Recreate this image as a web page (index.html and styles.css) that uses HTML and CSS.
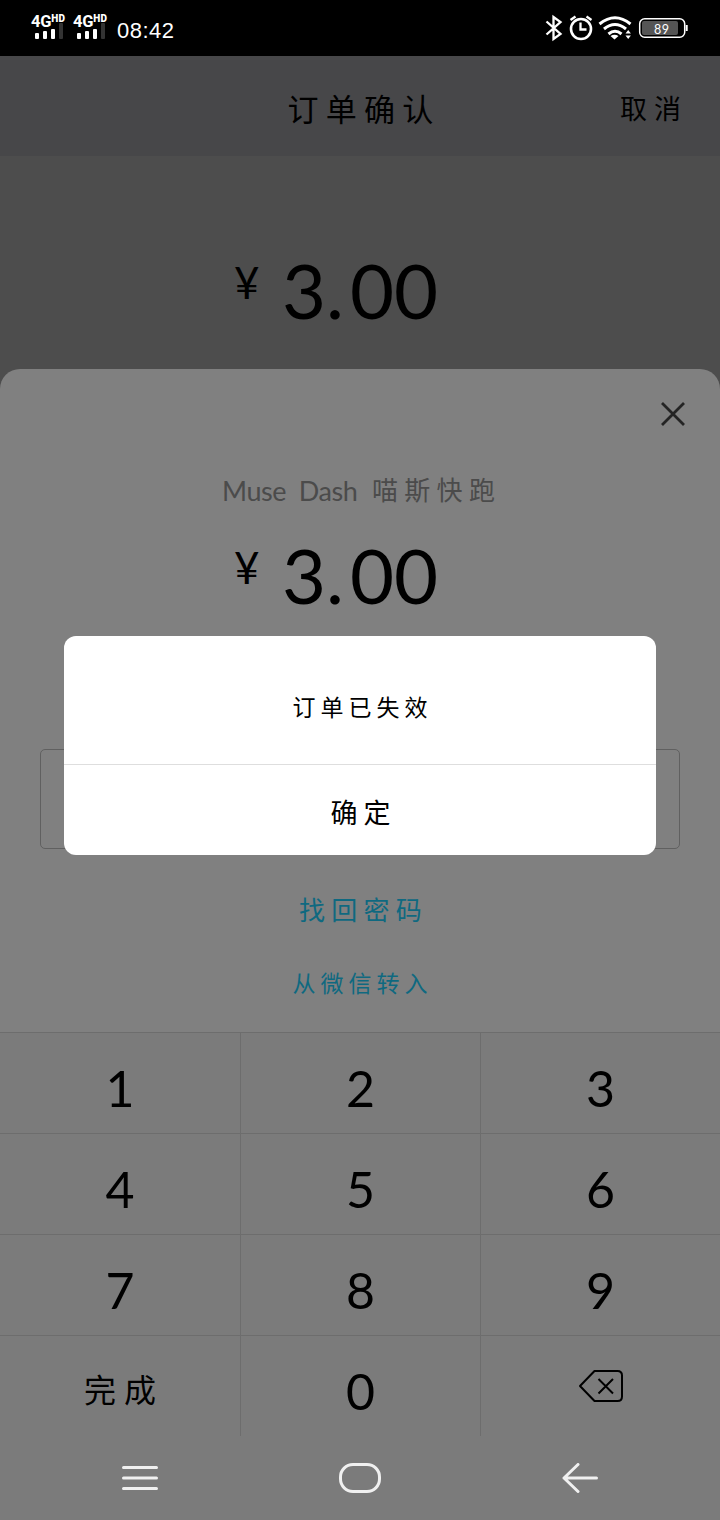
FILE: index.html
```html
<!DOCTYPE html>
<html lang="zh-CN">
<head>
<meta charset="utf-8">
<title>订单确认</title>
<link rel="stylesheet" href="styles.css">
</head>
<body>
<div class="screen">
  <div class="status">
    <div class="sims">
      <div class="sim"><div class="net">4G<sup>HD</sup></div><div class="bars"><i class="b1"></i><i class="b2"></i><i class="b3"></i><i class="b4"></i></div></div>
      <div class="sim"><div class="net">4G<sup>HD</sup></div><div class="bars"><i class="b1"></i><i class="b2"></i><i class="b3"></i><i class="b4"></i></div></div>
    </div>
    <div class="clock">08:42</div>
    <svg class="status-icons" width="146" height="30" viewBox="544 13 146 30" fill="none" stroke="#fff">
      <path d="M546.500 21.500 560.500 34 553.500 39V17L560.500 22 546.500 34.500" stroke-width="2.300"/>
      <circle cx="581" cy="29" r="10" stroke-width="2.600"/>
      <path d="M580.500 22.500v7h6M570.500 20l5-3.500M591.500 20l-5-3.500" stroke-width="2.300"/>
      <path d="M599.500 24q15.500-12.500 31 0M604 29q11-9 22 0M608.500 34q6.500-5.500 13 0" stroke-width="3"/>
      <path d="M610.500 36q4-2.500 8 0l-4 3.500zM625.500 33.500l2.700-3.500 2.700 3.500zM625.500 35.500h5.400l-2.700 3.500z" fill="#fff" stroke="none"/>
      <rect x="639.700" y="18.700" width="45" height="18.600" rx="5" stroke-width="1.500"/>
      <rect x="642" y="21" width="36" height="14" rx="2" fill="#555" stroke="none"/>
      <path d="M686.700 25v6" stroke-width="2"/>
      <text class="battery-text" x="654" y="33.500">89</text>
    </svg>
  </div>
  <div class="header">
    <span></span>
    <h1 class="title">订单确认</h1>
    <span class="cancel">取消</span>
  </div>
  <div class="order"><div class="amount"><span class="yen">¥</span><span class="value">3<b>.</b>00</span></div></div>
  <div class="sheet">
    <div class="close-row"><svg width="26" height="26" viewBox="0 0 26 26"><path d="M2 2 24 24M24 2 2 24" stroke="#242424" stroke-width="2.800"/></svg></div>
    <div class="goods"><span class="goods-latin">Muse Dash</span><span class="goods-cn">喵斯快跑</span></div>
    <div class="amount"><span class="yen">¥</span><span class="value">3<b>.</b>00</span></div>
    <div class="password"></div>
    <div class="find">找回密码</div>
    <div class="transfer">从微信转入</div>
  </div>
  <div class="keypad">
    <div class="key">1</div><div class="key">2</div><div class="key">3</div>
    <div class="key">4</div><div class="key">5</div><div class="key">6</div>
    <div class="key">7</div><div class="key">8</div><div class="key">9</div>
    <div class="key done">完成</div><div class="key">0</div>
    <div class="key erase"><svg width="46" height="34" viewBox="0 0 46 34" fill="none" stroke="#000" stroke-width="2"><path d="M2 17 16.500 2H39.500Q44 2 44 6.500V27.500Q44 32 39.500 32H16.500Z" stroke-linejoin="round"/><path d="M20.500 10 35 24.500M35 10 20.500 24.500"/></svg></div>
  </div>
  <div class="nav">
    <div><svg width="36" height="24" viewBox="0 0 36 24"><path d="M1.500 1.500h33M1.500 12h33M1.500 22.500h33" stroke="#f0f0f0" stroke-width="3" stroke-linecap="round"/></svg></div>
    <div><svg width="42" height="30" viewBox="0 0 42 30"><rect x="1.500" y="1.500" width="39" height="27" rx="12.500" fill="none" stroke="#f0f0f0" stroke-width="3"/></svg></div>
    <div><svg width="36" height="30" viewBox="0 0 36 30"><path d="M16 1.500 2 15 16 28.500M2 15H34.500" fill="none" stroke="#f0f0f0" stroke-width="3" stroke-linecap="round" stroke-linejoin="round"/></svg></div>
  </div>
  <div class="dialog">
    <div class="message">订单已失效</div>
    <div class="confirm">确定</div>
  </div>
</div>
</body>
</html>
```
FILE: styles.css
```css
* { box-sizing: border-box; }
body { margin: 0; background: #7b7b7b; font-family: Lato, "Noto Sans CJK SC", sans-serif; color: #000; }
.screen { position: relative; width: 720px; height: 1520px; overflow: hidden; background: #4d4d4d; display: flex; flex-direction: column; }
svg { display: block; }

.status { height: 56px; flex: none; background: #000; color: #fff; display: flex; align-items: flex-start; padding: 13px 30px 0 31px; }
.sims { display: flex; gap: 7px; }
.sim { width: 35px; }
.net { height: 16px; font: bold 16.5px/17px Roboto, sans-serif; letter-spacing: -0.2px; white-space: nowrap; display: flex; }
.net sup { font-size: 10px; line-height: 11px; font-weight: 900; letter-spacing: 0.2px; }
.bars { display: flex; align-items: flex-end; gap: 4px; height: 16px; margin: -6px 0 0 4px; }
.bars i { width: 4px; background: #fff; border-radius: 1px; }
.bars .b1 { height: 6px; }
.bars .b2 { height: 8px; }
.bars .b3 { height: 10px; }
.bars .b4 { height: 16px; background: #333; }
.clock { margin: 6px 0 0 9px; font: 22px/24px "Liberation Sans", sans-serif; letter-spacing: 0.5px; }
.status-icons { margin-left: auto; }
.battery-text { font: 12.5px Lato, sans-serif; fill: #fff; stroke: none; letter-spacing: 0.5px; }

.header { height: 100px; flex: none; background: #474749; display: grid; grid-template-columns: 1fr auto 1fr; align-items: center; padding-top: 6px; }
.title { margin: 0 0 0 8px; font-size: 31px; line-height: 44px; font-weight: 400; letter-spacing: 7.2px; }
.cancel { justify-self: end; margin-right: 32px; font-size: 27px; line-height: 40px; letter-spacing: 7px; }

.order { height: 213px; flex: none; padding-top: 87px; }
.amount { height: 90px; flex: none; display: flex; align-items: flex-start; padding-left: 234px; }
.yen { width: 48px; font-size: 44px; line-height: 78px; }
.value { font-size: 76px; line-height: 94px; letter-spacing: 0; }
.value b { font-weight: 400; letter-spacing: 6px; }

.sheet { height: 663px; flex: none; background: #808080; border-radius: 20px 20px 0 0; display: flex; flex-direction: column; }
.close-row { height: 101px; display: flex; justify-content: flex-end; padding: 32px 34px 0 0; }
.goods { height: 40px; display: flex; align-items: center; padding-left: 222px; color: #4b4b4b; }
.goods-latin { width: 150px; font-size: 27px; word-spacing: 6px; letter-spacing: -0.4px; white-space: nowrap; }
.goods-cn { font-size: 26px; line-height: 36px; margin-top: -1px; letter-spacing: 6.3px; }
.sheet .amount { margin-top: 18px; }
.password { height: 100px; flex: none; margin: 131px 40px 0; border: 1px solid #606060; border-radius: 5px; }
.find { margin-top: 41px; height: 40px; line-height: 40px; padding-left: 7px; text-align: center; color: #0f6980; font-size: 26px; letter-spacing: 6.3px; }
.transfer { margin-top: 34px; height: 38px; line-height: 38px; padding-left: 5px; text-align: center; color: #0f6980; font-size: 23px; letter-spacing: 5px; }

.keypad { height: 404px; flex: none; background: #7b7b7b; display: grid; grid-template-columns: repeat(3, 240px); grid-auto-rows: 101px; }
.key { border-top: 1px solid #6d6d6d; border-left: 1px solid #6d6d6d; display: flex; align-items: center; justify-content: center; padding-top: 10px; font-size: 50px; line-height: 60px; }
.key:nth-child(3n+1) { border-left-width: 0; }
.done { font-size: 32px; letter-spacing: 8px; padding: 7px 0 0 8px; }
.erase { padding: 0 0 0 1px; }
.nav { height: 84px; flex: none; background: #7b7b7b; display: grid; grid-template-columns: 280px 160px 280px; justify-items: center; align-items: center; }

.dialog { position: absolute; left: 64px; top: 636px; width: 592px; height: 219px; background: #fff; border-radius: 12px; display: flex; flex-direction: column; text-align: center; }
.message { height: 128px; padding: 52px 0 0 5px; line-height: 38px; font-size: 23px; letter-spacing: 5px; }
.confirm { flex: 1; border-top: 1px solid #dedede; padding: 28px 0 0 7px; line-height: 40px; font-size: 27px; font-weight: 400; letter-spacing: 6px; }
```
